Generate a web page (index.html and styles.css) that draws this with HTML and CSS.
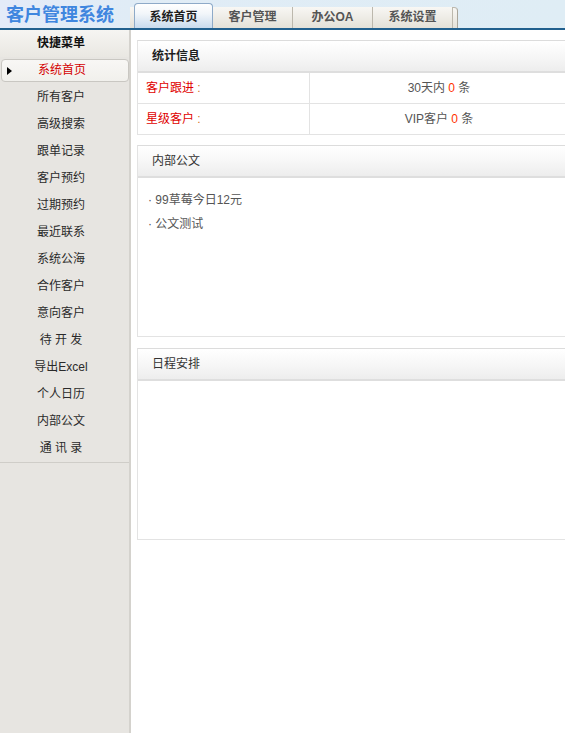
FILE: index.html
```html
<!DOCTYPE html>
<html lang="zh-CN">
<head>
<meta charset="utf-8">
<title>客户管理系统</title>
<link rel="stylesheet" href="styles.css">
</head>
<body>
<div class="header">
  <div class="logo">客户管理系统</div>
  <div class="tabs">
    <span class="tab-edge tab-edge-left"></span>
    <a class="tab active">系统首页</a>
    <a class="tab">客户管理</a>
    <a class="tab">办公OA</a>
    <a class="tab">系统设置</a>
    <span class="tab-edge tab-edge-right"></span>
  </div>
</div>
<div class="layout">
  <div class="sidebar">
    <div class="side-title">快捷菜单</div>
    <ul class="menu">
      <li class="active">系统首页</li>
      <li>所有客户</li>
      <li>高级搜索</li>
      <li>跟单记录</li>
      <li>客户预约</li>
      <li>过期预约</li>
      <li>最近联系</li>
      <li>系统公海</li>
      <li>合作客户</li>
      <li>意向客户</li>
      <li>待 开 发</li>
      <li>导出Excel</li>
      <li>个人日历</li>
      <li>内部公文</li>
      <li>通 讯 录</li>
    </ul>
  </div>
  <div class="main">
    <div class="panel">
      <div class="panel-head strong">统计信息</div>
      <div class="stat-row">
        <div class="stat-label">客户跟进<span class="colon"> :</span></div>
        <div class="stat-value">30天内 <span class="num">0</span> 条</div>
      </div>
      <div class="stat-row last">
        <div class="stat-label">星级客户<span class="colon"> :</span></div>
        <div class="stat-value">VIP客户 <span class="num">0</span> 条</div>
      </div>
    </div>
    <div class="panel">
      <div class="panel-head">内部公文</div>
      <div class="panel-body">
        <div class="doc">· 99草莓今日12元</div>
        <div class="doc">· 公文测试</div>
      </div>
    </div>
    <div class="panel panel-gap">
      <div class="panel-head">日程安排</div>
      <div class="panel-body"></div>
    </div>
  </div>
</div>
</body>
</html>
```

FILE: styles.css
```css
* { box-sizing: border-box; }
html, body {
  margin: 0;
  padding: 0;
  height: 100%;
}
body {
  font-family: "Liberation Sans", "Noto Sans CJK SC", sans-serif;
  font-size: 12px;
  color: #555;
  background: #fff;
  overflow: hidden;
  display: flex;
  flex-direction: column;
}

/* header */
.header {
  display: flex;
  height: 30px;
  flex: none;
  background: linear-gradient(90deg, #e4ebf8 0, #e0ecf6 130px, #dfedf5 100%);
  border-bottom: 2px solid #21608e;
}
.logo {
  width: 130px;
  padding-left: 6px;
  font-family: "Noto Sans CJK SC", sans-serif;
  font-weight: bold;
  font-size: 18px;
  line-height: 26px;
  color: #3f86df;
  white-space: nowrap;
}
.tabs {
  display: flex;
  align-items: flex-end;
}
.tab {
  display: block;
  width: 80px;
  height: 21px;
  line-height: 21px;
  text-align: center;
  font-weight: bold;
  font-size: 12px;
  color: #555;
  background: linear-gradient(#f8f7f4, #e4e1d8);
  border-right: 1px solid #bcb8ad;
}
.tab.active {
  width: 79px;
  height: 25px;
  line-height: 21px;
  padding-top: 3px;
  color: #1e1e1e;
  background: linear-gradient(#ffffff, #f2f6fa 40%, #c9dbed);
  border: 1px solid #8eaac8;
  border-bottom: none;
  border-radius: 4px 4px 0 0;
}
.tab-edge {
  display: block;
  height: 21px;
  background: linear-gradient(#f8f7f4, #e4e1d8);
}
.tab-edge-left {
  width: 4px;
}
.tab-edge-right {
  width: 5px;
  border-top: 1px solid #bcb8ad;
  border-right: 1px solid #a9a59a;
  border-radius: 0 4px 0 0;
}

/* layout */
.layout {
  flex: 1;
  display: flex;
  min-height: 0;
}

/* sidebar */
.sidebar {
  width: 131px;
  flex: none;
  background: #e7e5e1;
  border-right: 2px solid #d4d2cd;
}
.side-title {
  height: 27px;
  line-height: 26px;
  text-align: center;
  padding-right: 7px;
  font-weight: bold;
  color: #111;
  background: linear-gradient(#f6f5f2, #e9e7e2);
}
.menu {
  list-style: none;
  margin: 0;
  padding: 0;
  border-bottom: 1px solid #cfcdc8;
}
.menu li {
  height: 27px;
  line-height: 27px;
  text-align: center;
  padding-right: 7px;
  color: #2a2a2a;
}
.menu li.active {
  position: relative;
  height: 23px;
  line-height: 21px;
  margin: 2px 0 2px 1px;
  padding-right: 6px;
  color: #d40000;
  background: linear-gradient(#f8f7f5, #f1f0ec);
  border: 1px solid #c9c7c2;
  border-radius: 4px;
}
.menu li.active::before {
  content: "";
  position: absolute;
  left: 5px;
  top: 7px;
  border-left: 5px solid #000;
  border-top: 4px solid transparent;
  border-bottom: 4px solid transparent;
}

/* main */
.main {
  flex: 1;
  min-width: 0;
  overflow: hidden;
  padding: 10px 0 0 6px;
}
.panel {
  margin: 0 -4px 10px 0;
  border: 1px solid #e3e3e3;
  border-top-color: #dcdcdc;
}
.panel-gap {
  margin-top: 11px;
}
.panel-head {
  height: 32px;
  line-height: 30px;
  padding-left: 14px;
  color: #333;
  background: linear-gradient(#ffffff, #f7f7f7 50%, #ededed);
  border-bottom: 2px solid #dedede;
}
.panel-head.strong {
  font-weight: bold;
  color: #1e1e1e;
}
.stat-row {
  display: flex;
  height: 31px;
  border-bottom: 1px solid #e3e3e3;
}
.stat-row.last {
  height: 30px;
  border-bottom: none;
}
.stat-label {
  width: 172px;
  flex: none;
  padding-left: 8px;
  line-height: 30px;
  color: #e00000;
  border-right: 1px solid #e3e3e3;
}
.colon {
  color: #d8742a;
}
.stat-value {
  flex: 1;
  text-align: center;
  line-height: 30px;
  color: #555;
}
.num {
  color: #ff3300;
}
.panel-body {
  height: 158px;
  padding: 10px 10px 0 10px;
}
.doc {
  line-height: 24px;
  color: #555;
}
```
